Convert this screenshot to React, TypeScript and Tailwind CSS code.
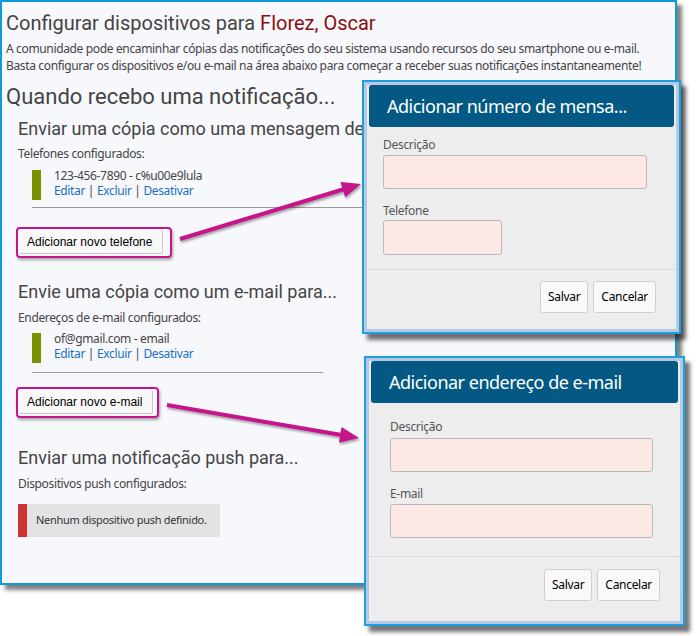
import React from "react";

type Pt = [number, number];

// Polygon for a thick arrow from a to b with a triangular head.
function arrowPoints(a: Pt, b: Pt, shaft = 2, headLen = 19, headHalf = 8): string {
  const dx = b[0] - a[0];
  const dy = b[1] - a[1];
  const len = Math.hypot(dx, dy);
  const ux = dx / len;
  const uy = dy / len;
  const nx = -uy;
  const ny = ux;
  const bx = b[0] - ux * headLen;
  const by = b[1] - uy * headLen;
  const pts: Pt[] = [
    [a[0] + nx * shaft, a[1] + ny * shaft],
    [bx + nx * shaft, by + ny * shaft],
    [bx + nx * headHalf, by + ny * headHalf],
    [b[0], b[1]],
    [bx - nx * headHalf, by - ny * headHalf],
    [bx - nx * shaft, by - ny * shaft],
    [a[0] - nx * shaft, a[1] - ny * shaft],
  ];
  return pts.map((p) => `${p[0].toFixed(1)},${p[1].toFixed(1)}`).join(" ");
}

const small = "font-['Noto_Sans',sans-serif] text-[12px] tracking-[-0.35px] text-[#444]";
const heading = "font-['Roboto',sans-serif] text-[#444]";

function Device({ label }: { label: string }) {
  return (
    <div className="ml-[14px] flex h-[30px] items-stretch">
      <div className="w-[9px] bg-[#7a9100]" />
      <div className="-mt-[2px] ml-[13px] flex flex-col">
        <div className={`${small} leading-[15px]`}>{label}</div>
        <div className={`${small} leading-[15px]`}>
          <a className="text-[#1a6fc4]">Editar</a> | <a className="text-[#1a6fc4]">Excluir</a> |{" "}
          <a className="text-[#1a6fc4]">Desativar</a>
        </div>
      </div>
    </div>
  );
}

function AddButton({ label, className }: { label: string; className: string }) {
  return (
    <div
      className={`-ml-[2px] h-[31px] rounded-[4px] border-2 border-[#c4168a] shadow-[1px_2px_3px_rgba(0,0,0,0.35)] ${className}`}
    >
      <div className="ml-[1px] mt-[1px] flex h-[24px] w-fit items-center rounded-[2px] border-b border-r border-[#c9c9c9] bg-[#f8f8f8] pl-[8px] pr-[10px] font-['Liberation_Sans',Arial,sans-serif] text-[12px] text-black">
        {label}
      </div>
    </div>
  );
}

function DialogFrame({ className, title, children }: { className: string; title: string; children: React.ReactNode }) {
  return (
    <div
      className={`absolute z-20 border-2 border-[#1d9ee0] bg-[#b7c9e2] p-[3px] shadow-[5px_6px_4px_rgba(0,0,0,0.55)] ${className}`}
    >
      <div className="bg-[#ededed]">
        <div className="mx-[2px] flex h-[42px] items-center rounded-[3px] bg-[#035984] pl-[18px] font-['Noto_Sans',sans-serif] text-[18px] tracking-[-0.5px] text-white">
          {title}
        </div>
        {children}
      </div>
    </div>
  );
}

function Field({ label, className }: { label: string; className: string }) {
  return (
    <div className="flex flex-col">
      <div className="font-['Noto_Sans',sans-serif] text-[12px] leading-[16px] tracking-[-0.3px] text-[#555]">{label}</div>
      <div className={`rounded-[3px] border border-[#b9b9b9] bg-[#fce8e5] ${className}`} />
    </div>
  );
}

function Footer({ className }: { className: string }) {
  return (
    <>
      <div className="mx-[1px] h-px bg-[#d9d9d9]" />
      <div className={`flex justify-end gap-[5px] pr-[20px] ${className}`}>
        {["Salvar", "Cancelar"].map((b) => (
          <div
            key={b}
            className="flex h-[32px] items-center rounded-[3px] border border-[#cfcfcf] bg-[#f9f9f9] px-[7px] font-['Noto_Sans',sans-serif] text-[12px] tracking-[-0.3px] text-black"
          >
            {b}
          </div>
        ))}
      </div>
    </>
  );
}

export default function App() {
  return (
    <div className="relative h-[636px] w-[699px] overflow-hidden bg-white">
      <div className="relative h-[585px] w-[677px] border-2 border-[#0e9bd9] bg-[#f7f8fc] pl-[4px] pt-[8px] shadow-[5px_5px_4px_rgba(0,0,0,0.5)]">
        <h1 className={`${heading} text-[20px] leading-[26px] text-[#333]`}>
          Configurar dispositivos para <span className="text-[#8a0d0d]">Florez, Oscar</span>
        </h1>
        <p className={`${small} mt-[4px] whitespace-nowrap leading-[17px]`}>
          A comunidade pode encaminhar cópias das notificações do seu sistema usando recursos do seu smartphone ou e-mail.
          <br />
          Basta configurar os dispositivos e/ou e-mail na área abaixo para começar a receber suas notificações instantaneamente!
        </p>
        <h2 className={`${heading} mt-[9px] text-[22px] leading-[28px] text-[#333]`}>Quando recebo uma notificação...</h2>

        <section className="pl-[12px]">
          <h3 className={`${heading} mt-[7px] whitespace-nowrap text-[18px] leading-[22px]`}>
            Enviar uma cópia como uma mensagem de texto para...
          </h3>
          <div className={`${small} mt-[6px] leading-[16px]`}>Telefones configurados:</div>
          <div className="mt-[8px]">
            <Device label="123-456-7890 - c%u00e9lula" />
          </div>
          <div className="ml-[14px] mt-[7px] h-px w-[345px] bg-[#9a9a9a]" />
          <AddButton label="Adicionar novo telefone" className="mt-[19px] w-[156px]" />

          <h3 className={`${heading} mt-[23px] text-[18px] leading-[22px]`}>Envie uma cópia como um e-mail para...</h3>
          <div className={`${small} mt-[7px] leading-[16px]`}>Endereços de e-mail configurados:</div>
          <div className="mt-[7px]">
            <Device label="of@gmail.com - email" />
          </div>
          <div className="ml-[14px] mt-[9px] h-px w-[291px] bg-[#9a9a9a]" />
          <AddButton label="Adicionar novo e-mail" className="mt-[14px] w-[143px]" />

          <h3 className={`${heading} mt-[29px] text-[18px] leading-[22px]`}>Enviar uma notificação push para...</h3>
          <div className={`${small} mt-[7px] leading-[16px]`}>Dispositivos push configurados:</div>
          <div className="mt-[12px] flex h-[33px] w-[202px] items-center bg-[#e3e3e3]">
            <div className="h-full w-[9px] bg-[#cc3333]" />
            <div className="ml-[9px] font-['Noto_Sans',sans-serif] text-[11px] tracking-[-0.3px] text-[#333]">
              Nenhum dispositivo push definido.
            </div>
          </div>
        </section>
      </div>

      {/* callout arrows from the buttons to their dialogs */}
      <svg className="pointer-events-none absolute left-0 top-0 z-10" width="699" height="636">
        <defs>
          <filter id="arrowShadow" x="-10%" y="-50%" width="120%" height="200%">
            <feDropShadow dx="1" dy="2" stdDeviation="1.2" floodColor="#000" floodOpacity="0.35" />
          </filter>
        </defs>
        <polygon points={arrowPoints([180, 239], [361, 184])} fill="#c4168a" filter="url(#arrowShadow)" />
        <polygon points={arrowPoints([167, 405], [359, 438])} fill="#c4168a" filter="url(#arrowShadow)" />
      </svg>

      <DialogFrame title="Adicionar número de mensa..." className="left-[362px] top-[80px] w-[319px]">
        <div className="flex flex-col gap-[14px] pl-[16px] pt-[10px]">
          <Field label="Descrição" className="mt-[2px] h-[34px] w-[264px]" />
          <Field label="Telefone" className="mt-[1px] h-[35px] w-[119px]" />
        </div>
        <div className="mt-[14px]">
          <Footer className="mt-[11px] pb-[16px]" />
        </div>
      </DialogFrame>

      <DialogFrame title="Adicionar endereço de e-mail" className="left-[364px] top-[356px] w-[321px]">
        <div className="flex flex-col gap-[14px] pl-[21px] pt-[16px]">
          <Field label="Descrição" className="mt-[3px] h-[34px] w-[263px]" />
          <Field label="E-mail" className="mt-[2px] h-[34px] w-[263px]" />
        </div>
        <div className="mt-[18px]">
          <Footer className="mt-[12px] pb-[20px]" />
        </div>
      </DialogFrame>
    </div>
  );
}
